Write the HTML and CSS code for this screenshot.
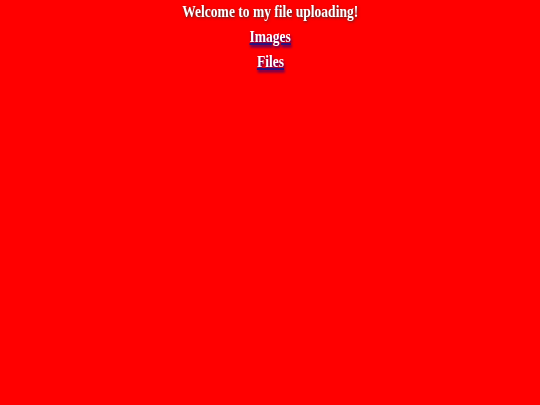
FILE: index.html
```html
<!DOCTYPE html>
<html>
<head>
<meta charset="utf-8">
<link rel="stylesheet" href="styles.css">
</head>
<body class="page">
<div class="wrap">
<div class="title">Welcome to my file uploading!</div>
<a class="nav-link" href="#">Images</a>
<a class="nav-link" href="#">Files</a>
</div>
</body>
</html>
```
FILE: styles.css
```css
html, body { margin: 0; padding: 0; }
.page {
  background: #ff0000;
  width: 540px;
  height: 405px;
  font-family: "Liberation Serif", "Times New Roman", serif;
}
.wrap {
  display: flex;
  flex-direction: column;
  align-items: center;
  padding-top: 1.5px;
  gap: 6px;
}
.title {
  display: inline-block;
  color: #fff;
  font-weight: bold;
  font-size: 16.5px;
  line-height: 19px;
  transform: scaleX(0.82);
  text-shadow: 1px 1px 3px #333;
}
.nav-link {
  display: inline-block;
  color: #fff;
  font-weight: bold;
  font-size: 16.5px;
  line-height: 19px;
  transform: scaleX(0.82);
  text-decoration: underline;
  text-decoration-color: #2a1080;
  text-decoration-thickness: 2px;
  text-underline-offset: 1px;
  text-shadow: 1px 2px 3px #1a0080;
}
```
